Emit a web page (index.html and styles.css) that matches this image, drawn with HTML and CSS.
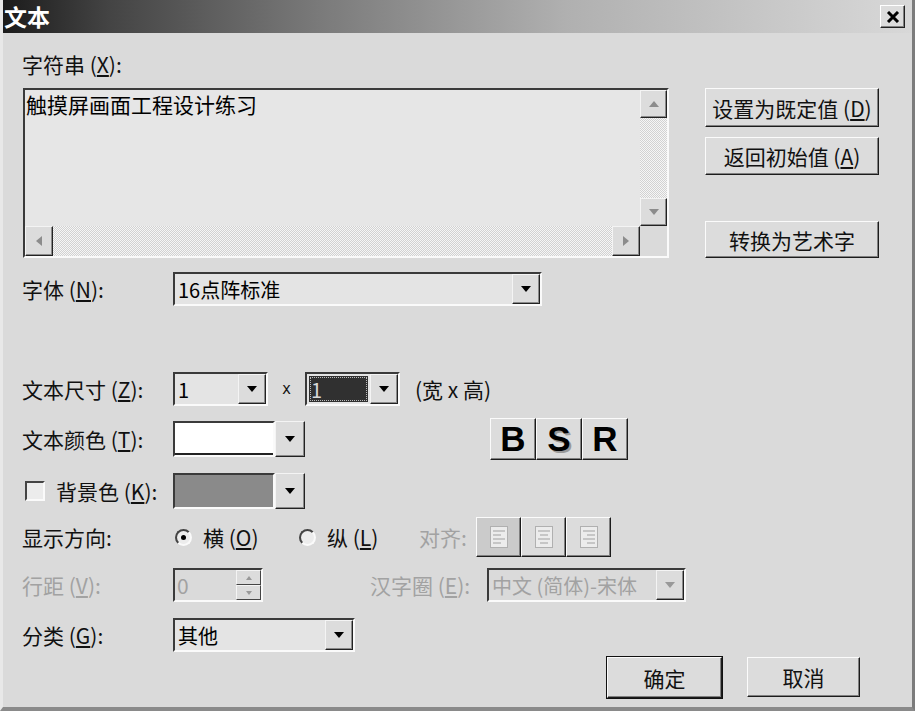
FILE: index.html
```html
<html>
  <head>
    <meta charset="utf-8" />
    <title>文本</title>
    <link rel="stylesheet" href="styles.css">
  </head>
  <body>
    <div class="window">
      <div class="titlebar">
        <span class="title">文本</span>
        <span class="close">
          <svg width="14" height="12" viewBox="0 0 14 12"><path d="M2 1 L12 11 M12 1 L2 11" stroke="#000" stroke-width="3"/></svg>
        </span>
      </div>
      <div class="content">
        <div class="top">
          <div class="text-col">
            <div class="label top-label">字符串 (<u>X</u>):</div>
            <div class="textbox">
              <div class="textbox-text">触摸屏画面工程设计练习</div>
              <div class="vscroll">
                <span class="sbtn"><svg width="10" height="6"><polygon points="0,6 10,6 5,0" fill="#8c8c8c"/></svg></span>
                <span class="track"></span>
                <span class="sbtn"><svg width="10" height="6"><polygon points="0,0 10,0 5,6" fill="#8c8c8c"/></svg></span>
              </div>
              <div class="hscroll">
                <span class="sbtn"><svg width="6" height="10"><polygon points="6,0 6,10 0,5" fill="#8c8c8c"/></svg></span>
                <span class="track"></span>
                <span class="sbtn"><svg width="6" height="10"><polygon points="0,0 0,10 6,5" fill="#8c8c8c"/></svg></span>
              </div>
              <div class="corner"></div>
            </div>
          </div>
          <div class="side">
            <div class="btn side-btn">设置为既定值 (<u>D</u>)</div>
            <div class="btn side-btn second">返回初始值 (<u>A</u>)</div>
            <div class="btn side-btn third">转换为艺术字</div>
          </div>
        </div>

        <div class="row font-row">
          <div class="label">字体 (<u>N</u>):</div>
          <div class="combo font-combo">
            <div class="combo-value">16点阵标准</div>
            <div class="combo-btn"><svg width="10" height="6"><polygon points="0,0 10,0 5,6" fill="#000"/></svg></div>
          </div>
        </div>

        <div class="row size-row">
          <div class="label">文本尺寸 (<u>Z</u>):</div>
          <div class="combo size-combo">
            <div class="combo-value">1</div>
            <div class="combo-btn"><svg width="10" height="6"><polygon points="0,0 10,0 5,6" fill="#000"/></svg></div>
          </div>
          <span class="times">x</span>
          <div class="combo size-combo">
            <div class="combo-value"><span class="focused">1</span></div>
            <div class="combo-btn"><svg width="10" height="6"><polygon points="0,0 10,0 5,6" fill="#000"/></svg></div>
          </div>
          <span class="dims">(宽 x 高)</span>
        </div>

        <div class="row color-row">
          <div class="label">文本颜色 (<u>T</u>):</div>
          <div class="color-pick">
            <div class="swatch white"></div>
            <div class="combo-btn"><svg width="10" height="6"><polygon points="0,0 10,0 5,6" fill="#000"/></svg></div>
          </div>
          <div class="style-btns">
            <span class="btn style-btn">B</span>
            <span class="btn style-btn shadow">S</span>
            <span class="btn style-btn">R</span>
          </div>
        </div>

        <div class="row bg-row">
          <div class="label check-label"><span class="checkbox"></span>背景色 (<u>K</u>):</div>
          <div class="color-pick">
            <div class="swatch gray"></div>
            <div class="combo-btn"><svg width="10" height="6"><polygon points="0,0 10,0 5,6" fill="#000"/></svg></div>
          </div>
        </div>

        <div class="row dir-row">
          <div class="label">显示方向:</div>
          <label class="radio"><span class="dot checked"></span>横 (<u>O</u>)</label>
          <label class="radio"><span class="dot"></span>纵 (<u>L</u>)</label>
          <span class="disabled align-label">对齐:</span>
          <div class="align-btns">
            <span class="btn align-btn pressed">
              <svg width="18" height="22"><rect x="0.5" y="0.5" width="17" height="21" fill="#ececec" stroke="#b0b0b0"/><path d="M3 5H15M3 9H11M3 13H15M3 17H11" stroke="#a0a0a0"/></svg>
            </span>
            <span class="btn align-btn">
              <svg width="18" height="22"><rect x="0.5" y="0.5" width="17" height="21" fill="#ececec" stroke="#b0b0b0"/><path d="M3 5H15M5 9H13M3 13H15M5 17H13" stroke="#a0a0a0"/></svg>
            </span>
            <span class="btn align-btn">
              <svg width="18" height="22"><rect x="0.5" y="0.5" width="17" height="21" fill="#ececec" stroke="#b0b0b0"/><path d="M3 5H15M7 9H15M3 13H15M7 17H15" stroke="#a0a0a0"/></svg>
            </span>
          </div>
        </div>

        <div class="row spacing-row">
          <div class="label disabled">行距 (<u>V</u>):</div>
          <div class="spin">
            <div class="spin-value">0</div>
            <div class="spin-btns">
              <span class="spin-btn"><svg width="6" height="4"><polygon points="0,4 6,4 3,0" fill="#999"/></svg></span>
              <span class="spin-btn"><svg width="6" height="4"><polygon points="0,0 6,0 3,4" fill="#999"/></svg></span>
            </div>
          </div>
          <span class="disabled charset-label">汉字圈 (<u>E</u>):</span>
          <div class="combo charset-combo">
            <div class="combo-value disabled">中文 (简体)-宋体</div>
            <div class="combo-btn"><svg width="10" height="6"><polygon points="0,0 10,0 5,6" fill="#999"/></svg></div>
          </div>
        </div>

        <div class="row cat-row">
          <div class="label">分类 (<u>G</u>):</div>
          <div class="combo cat-combo">
            <div class="combo-value">其他</div>
            <div class="combo-btn"><svg width="10" height="6"><polygon points="0,0 10,0 5,6" fill="#000"/></svg></div>
          </div>
        </div>

        <div class="footer">
          <div class="btn foot-btn default">确定</div>
          <div class="btn foot-btn">取消</div>
        </div>
      </div>
    </div>
  </body>
</html>
```

FILE: styles.css
```css
* {
  margin: 0;
  padding: 0;
  box-sizing: border-box;
}
body {
  background: #dadada;
  font-family: "Noto Sans CJK SC", "DejaVu Sans", sans-serif;
  color: #111;
}
.window {
  width: 915px;
  height: 711px;
  background: #dadada;
  border-left: 3px solid #e8e8e8;
  border-right: 3px solid #7c7c7c;
  border-bottom: 4px solid #8a8a8a;
  overflow: hidden;
}
.titlebar {
  height: 33px;
  margin-left: -3px;
  display: flex;
  align-items: center;
  justify-content: space-between;
  padding: 0 7px 0 4px;
  background: linear-gradient(to right, #1a1a1a 0%, #444 12%, #7a7a7a 35%, #b0b0b0 62%, #d8d8d8 100%);
}
.title {
  color: #fff;
  font-weight: bold;
  font-size: 23px;
  line-height: 1;
}
.close {
  width: 25px;
  height: 23px;
  display: flex;
  align-items: center;
  justify-content: center;
  background: #dcdcdc;
  border: 1px solid;
  border-color: #fff #222 #222 #fff;
  box-shadow: inset -1px -1px #808080;
}
.content {
  padding-left: 19px;
}
.label {
  font-size: 21px;
  line-height: 24px;
  width: 151px;
  flex-shrink: 0;
  white-space: nowrap;
}
u {
  text-decoration: underline;
}
.disabled {
  color: #a2a2a2;
}

/* top part */
.top {
  display: flex;
  align-items: flex-start;
}
.top-label {
  margin-top: 19px;
}
.textbox {
  margin-top: 12px;
  margin-left: 1px;
  width: 646px;
  height: 170px;
  display: grid;
  grid-template-columns: 1fr 27px;
  grid-template-rows: 1fr 30px;
  background: #e6e6e6;
  border: 2px solid;
  border-color: #3a3a3a #fafafa #fafafa #3a3a3a;
}
.textbox-text {
  font-size: 21px;
  line-height: 24px;
  padding: 2px 1px;
  white-space: nowrap;
  color: #000;
}
.vscroll {
  display: flex;
  flex-direction: column;
}
.hscroll {
  display: flex;
}
.track {
  flex: 1;
  background: repeating-conic-gradient(#f6f6f6 0 25%, #d2d2d2 0 50%) 0 0 / 2px 2px;
}
.sbtn {
  width: 27px;
  height: 28px;
  flex-shrink: 0;
  display: flex;
  align-items: center;
  justify-content: center;
  background: #dcdcdc;
  border: 1px solid;
  border-color: #f4f4f4 #222 #222 #f4f4f4;
  box-shadow: inset -1px -1px #8a8a8a;
}
.hscroll .sbtn {
  height: 30px;
  width: 28px;
}
.corner {
  background: #dadada;
}
.side {
  margin-top: 55px;
  margin-left: 36px;
  display: flex;
  flex-direction: column;
}
.btn {
  background: #dcdcdc;
  border: 1px solid;
  border-color: #fbfbfb #1c1c1c #1c1c1c #fbfbfb;
  box-shadow: inset -1px -1px #808080;
  display: flex;
  align-items: center;
  justify-content: center;
  white-space: nowrap;
}
.side-btn {
  width: 174px;
  height: 39px;
  font-size: 21px;
}
.side-btn.second {
  margin-top: 10px;
  height: 38px;
}
.side-btn.third {
  margin-top: 46px;
  height: 37px;
}

/* form rows */
.row {
  display: flex;
  align-items: center;
  font-size: 21px;
}
.font-row { margin-top: 14px; height: 34px; }
.size-row { margin-top: 66px; height: 34px; }
.color-row { margin-top: 12px; height: 42px; }
.bg-row { margin-top: 13px; height: 35px; }
.dir-row { margin-top: 9px; height: 40px; }
.spacing-row { margin-top: 11px; height: 34px; }
.cat-row { margin-top: 16px; height: 34px; }

.combo {
  height: 34px;
  display: flex;
  align-items: stretch;
  background: #e4e4e4;
  border: 2px solid;
  border-color: #3a3a3a #fafafa #fafafa #3a3a3a;
}
.combo-value {
  flex: 1;
  display: flex;
  align-items: center;
  padding-left: 3px;
  font-size: 20px;
  white-space: nowrap;
  overflow: hidden;
  color: #000;
}
.combo-value.disabled {
  color: #a2a2a2;
}
.combo-btn {
  width: 28px;
  display: flex;
  align-items: center;
  justify-content: center;
  background: #dcdcdc;
  border: 1px solid;
  border-color: #f4f4f4 #222 #222 #f4f4f4;
  box-shadow: inset -1px -1px #8a8a8a;
}
.font-combo { width: 369px; }
.size-combo { width: 95px; }
.cat-combo { width: 182px; }
.charset-combo { width: 199px; }
.times {
  width: 37px;
  text-align: center;
  font-family: "DejaVu Sans Mono", monospace;
  font-size: 15px;
}
.focused {
  display: flex;
  align-items: center;
  width: 59px;
  height: 26px;
  margin-left: -1px;
  padding-left: 2px;
  background: #303030;
  color: #d8d8d8;
  outline: 1px dotted #bbb;
  outline-offset: -2px;
}
.dims {
  margin-left: 15px;
}

.color-pick {
  width: 132px;
  height: 36px;
  display: flex;
}
.swatch {
  flex: 1;
  border: 2px solid;
  border-color: #3a3a3a #fafafa #fafafa #3a3a3a;
}
.swatch.white { background: #fff; box-shadow: inset 0 -2px #222; }
.swatch.gray { background: #8a8a8a; }
.color-pick .combo-btn {
  width: 30px;
}
.style-btns {
  margin-left: 185px;
  display: flex;
}
.style-btn {
  width: 46px;
  height: 42px;
  font-family: "Liberation Sans", Arial, sans-serif;
  font-weight: bold;
  font-size: 35px;
  color: #000;
}
.style-btn.shadow {
  text-shadow: 2px 2px #9a9a9a;
}

.check-label {
  display: flex;
  align-items: center;
}
.checkbox {
  width: 20px;
  height: 20px;
  margin: 0 11px 0 3px;
  background: #ececec;
  border: 2px solid;
  border-color: #444 #fafafa #fafafa #444;
}

.radio {
  display: flex;
  align-items: center;
  width: 124px;
  font-size: 21px;
}
.radio:nth-of-type(2) {
  width: 122px;
}
.dot {
  width: 17px;
  height: 17px;
  margin: 0 11px 0 2px;
  border-radius: 50%;
  background: #ececec;
  border: 2px solid;
  border-color: #444 #fafafa #fafafa #444;
  display: flex;
  align-items: center;
  justify-content: center;
}
.dot.checked::after {
  content: "";
  width: 5px;
  height: 5px;
  border-radius: 50%;
  background: #000;
}
.align-label {
  width: 57px;
}
.align-btns {
  display: flex;
}
.align-btn {
  width: 45px;
  height: 40px;
}
.align-btn.pressed {
  background: #cbcbcb;
}

.spin {
  width: 90px;
  height: 34px;
  display: flex;
  border: 2px solid;
  border-color: #3a3a3a #fafafa #fafafa #3a3a3a;
  background: #dadada;
}
.spin-value {
  flex: 1;
  padding-left: 2px;
  color: #a2a2a2;
  display: flex;
  align-items: center;
}
.spin-btns {
  width: 25px;
  display: flex;
  flex-direction: column;
}
.spin-btn {
  flex: 1;
  display: flex;
  align-items: center;
  justify-content: center;
  background: #dcdcdc;
  border: 1px solid;
  border-color: #f4f4f4 #444 #444 #f4f4f4;
}
.charset-label {
  margin-left: 107px;
  width: 117px;
  white-space: nowrap;
}
.charset-combo {
  background: #dadada;
}

.footer {
  margin-top: 5px;
  display: flex;
  justify-content: flex-end;
  gap: 25px;
  padding-right: 52px;
}
.foot-btn {
  width: 113px;
  height: 40px;
  font-size: 21px;
}
.foot-btn.default {
  width: 115px;
  height: 41px;
  outline: 1px solid #111;
}
```
